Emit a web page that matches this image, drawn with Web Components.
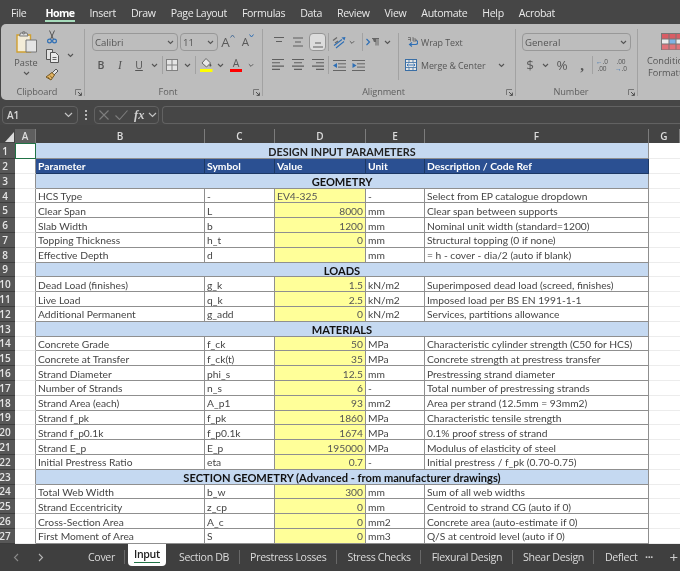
<!DOCTYPE html>
<html>
<head>
<meta charset="utf-8">
<title>Input</title>
<style>
  html, body { margin: 0; height: 100%; background: #464646; overflow: hidden; }
  body { display: flex; flex-direction: column; width: 680px; height: 571px; font-family: "Open Sans", sans-serif; filter: blur(.3px); }
</style>
</head>
<body>
<xl-menu>
  <xl-menu-item style="margin-right:4px">File</xl-menu-item>
  <xl-menu-item active>Home</xl-menu-item>
  <xl-menu-item>Insert</xl-menu-item>
  <xl-menu-item>Draw</xl-menu-item>
  <xl-menu-item>Page Layout</xl-menu-item>
  <xl-menu-item>Formulas</xl-menu-item>
  <xl-menu-item>Data</xl-menu-item>
  <xl-menu-item>Review</xl-menu-item>
  <xl-menu-item>View</xl-menu-item>
  <xl-menu-item>Automate</xl-menu-item>
  <xl-menu-item>Help</xl-menu-item>
  <xl-menu-item>Acrobat</xl-menu-item>
</xl-menu>
<xl-ribbon></xl-ribbon>
<xl-formula-bar></xl-formula-bar>
<xl-sheet></xl-sheet>
<xl-sheet-tabs>
  <xl-tab>Cover</xl-tab>
  <xl-tab active>Input</xl-tab>
  <xl-tab>Section DB</xl-tab>
  <xl-tab>Prestress Losses</xl-tab>
  <xl-tab>Stress Checks</xl-tab>
  <xl-tab>Flexural Design</xl-tab>
  <xl-tab>Shear Design</xl-tab>
  <xl-tab last>Deflect</xl-tab>
</xl-sheet-tabs>

<script>
// evenly spaced horizontal lines, [x1, x2] per line
function lines(list, top, step) {
  const d = list.map((l, i) => `M${l[0]} ${top + i * step}H${l[1]}`).join("");
  return `<svg width="14" height="14" viewBox="0 0 14 14"><path d="${d}" stroke="#5f5f5f" stroke-width="1.1" fill="none"/></svg>`;
}

const ICONS = {
  paste: `<svg width="21" height="22" viewBox="0 0 21 22"><path d="M1 4h13.500v17H1z" fill="#f3ecd8" stroke="#d0a030" stroke-width="1.4"/><path d="M4.500 2h6.500l1 3H3.500z" fill="#e2e2e2" stroke="#777"/><circle cx="7.700" cy="1.800" r="1.300" fill="none" stroke="#777"/><path d="M10 9h10.500v12H10z" fill="#e4e4e4" stroke="#777"/></svg>`,
  scissors: `<svg width="10" height="14" viewBox="0 0 10 14"><path d="M2.500 .5l3.800 8.500M7.500 .5L3.700 9" stroke="#555" stroke-width="1" fill="none"/><circle cx="2.500" cy="11" r="1.900" fill="none" stroke="#2f6fb5" stroke-width="1.200"/><circle cx="7.500" cy="11" r="1.900" fill="none" stroke="#2f6fb5" stroke-width="1.200"/></svg>`,
  copy: `<svg width="13" height="14" viewBox="0 0 13 14"><path d="M.5.500h6v10h-6z" fill="#e2e2e2" stroke="#555"/><path d="M4.500 3.500h5l3 3v7h-8z" fill="#e9e9e9" stroke="#555"/><path d="M6.500 8.500h4M6.500 10.500h4" stroke="#666"/></svg>`,
  painter: `<svg width="14" height="14" viewBox="0 0 14 14"><path d="M7 5l4-4 2 2-4 4z" fill="#e3e3e3" stroke="#555"/><path d="M7 4.500l2.500 2.500L6 12 1 9z" fill="#e2b464" stroke="#6b4d16" stroke-width=".9"/><path d="M3 9l1.500 2M5 7.500L7 10" stroke="#6b4d16" stroke-width=".7"/></svg>`,
  chev: `<svg width="7" height="5" viewBox="0 0 7 5"><path d="M1 1l2.500 2.500L6 1" fill="none" stroke="#555" stroke-width="1.100"/></svg>`,
  launcher: `<svg width="7" height="7" viewBox="0 0 7 7"><path d="M.5 6V.5H6" fill="none" stroke="#777"/><path d="M3 3l3.200 3.200M6.400 3.600v2.800H3.600" fill="none" stroke="#444" stroke-width=".9"/></svg>`,
  borders: `<svg width="12" height="12" viewBox="0 0 12 12"><rect x=".5" y=".5" width="11" height="11" fill="#e4e4e4" stroke="#808080"/><path d="M6 .5v11M.5 6h11" stroke="#808080"/></svg>`,
  fill: `<svg width="13" height="14" viewBox="0 0 13 14"><path d="M6 .5l4.500 4.500-4 4L2 5z" fill="#e8e8e8" stroke="#666"/><path d="M10.500 5.500c.7 1 .9 1.500.9 2a1 1 0 0 1-2 0c0-.5.4-1 1.100-2z" fill="#555"/><rect x="0" y="11" width="12.500" height="3" fill="#ffff00"/></svg>`,
  grow: `<svg width="5" height="4" viewBox="0 0 5 4"><path d="M.5 3.500L2.500 1l2 2.500" fill="none" stroke="#4b6f96" stroke-width="1"/></svg>`,
  shrink: `<svg width="5" height="4" viewBox="0 0 5 4"><path d="M.5.5L2.500 3l2-2.500" fill="none" stroke="#2f6fb5" stroke-width="1"/></svg>`,
  alTop: lines([[2,12],[4,10]], 2.500, 4),
  alMid: lines([[2,12],[4,10],[2,12]], 3, 4),
  alBot: lines([[4,10],[2,12]], 8, 4),
  left: lines([[1,13],[1,9],[1,13],[1,9]], 1.500, 3.300),
  center: lines([[1,13],[3,11],[1,13],[3,11]], 1.500, 3.300),
  right: lines([[1,13],[5,13],[1,13],[5,13]], 1.500, 3.300),
  orient: `<svg width="14" height="13" viewBox="0 0 14 13"><path d="M2 9.500l8-6M4 12l8-6.500" stroke="#2f6fb5" stroke-width="1.100" fill="none"/><path d="M13.500 1l-4 .6 3 3z" fill="#2f6fb5"/><path d="M1 4.500l4-3M3 7l3-2" stroke="#666" stroke-width="1.200"/></svg>`,
  rtl: `<svg width="14" height="8" viewBox="0 0 14 8"><path d="M.5 1l3 3-3 3" fill="none" stroke="#2f6fb5" stroke-width="1.200"/><path d="M6 .5h7M10 .5v7M12 .5v7" stroke="#666"/><path d="M6.500 .5h3.500v3.500H8z" fill="#666"/></svg>`,
  outdent: `<svg width="13" height="11" viewBox="0 0 13 11"><path d="M0 .5h13M5 3.800h8M5 7.100h8M0 10.500h13" stroke="#666"/><path d="M0 5.500l4-2.500v5z" fill="#2f6fb5"/></svg>`,
  indent: `<svg width="13" height="11" viewBox="0 0 13 11"><path d="M0 .5h13M5 3.800h8M5 7.100h8M0 10.500h13" stroke="#666"/><path d="M4.500 5.500L.5 3v5z" fill="#2f6fb5"/></svg>`,
  wrap: `<svg width="11" height="12" viewBox="0 0 11 12"><path d="M8.500 4.500c3 0 3 4 0 4H3" fill="none" stroke="#2f6fb5" stroke-width="1.100"/><path d="M5 6.500L2.500 8.500 5 10.500" fill="none" stroke="#2f6fb5" stroke-width="1.100"/><path d="M1 3.500h3M1 1.500h2.500v4M6 1v4h3V3H6" fill="none" stroke="#666" stroke-width=".8"/></svg>`,
  merge: `<svg width="12" height="12" viewBox="0 0 12 12"><rect x=".5" y=".5" width="11" height="11" fill="#e6e6e6" stroke="#3a6ea5"/><path d="M.5 3.500h11M.5 8.500h11M4 .5v3M8 .5v3M4 8.500v3M8 8.500v3" stroke="#3a6ea5" stroke-width=".8"/><path d="M2 6h8M3.500 4.700L2 6l1.500 1.300M8.500 4.700L10 6 8.500 7.300" stroke="#2f6fb5" fill="none" stroke-width=".9"/></svg>`,
  cond: `<svg width="22" height="17" viewBox="0 0 22 17"><rect x=".5" y=".5" width="21" height="16" fill="#ececec" stroke="#777"/><path d="M1 1h20v5H1z" fill="#d85c64"/><path d="M8 6h7v5H8z" fill="#7fb2e5"/><path d="M1 11h20v5.500H1z" fill="#e0737a"/><path d="M8 .5v16M15 .5v16M.5 6h21M.5 11h21" stroke="#777" fill="none"/></svg>`,
  x: `<svg width="10" height="10" viewBox="0 0 10 10"><path d="M.5.500l9 9M9.500.5l-9 9" stroke="#7d7d7d" stroke-width="1.100"/></svg>`,
  check: `<svg width="13" height="10" viewBox="0 0 13 10"><path d="M.5 5.500l4 4 8-9" fill="none" stroke="#7d7d7d" stroke-width="1.100"/></svg>`,
  chevLight: `<svg width="9" height="6" viewBox="0 0 9 6"><path d="M1 1l3.500 3.500L8 1" fill="none" stroke="#c4c4c4" stroke-width="1.200"/></svg>`,
  corner: `<svg width="9" height="10" viewBox="0 0 9 10"><path d="M9 0v10H0z" fill="#dcdcdc"/></svg>`,
  prev: `<svg width="6" height="9" viewBox="0 0 6 9"><path d="M5 1L1.500 4.500 5 8" fill="none" stroke="#8a8a8a" stroke-width="1.100"/></svg>`,
  next: `<svg width="6" height="9" viewBox="0 0 6 9"><path d="M1 1l3.500 3.500L1 8" fill="none" stroke="#b5b5b5" stroke-width="1.100"/></svg>`
};

class XlIcon extends HTMLElement {
  connectedCallback() {
    const root = this.attachShadow({ mode: "open" });
    const w = this.getAttribute("w");
    root.innerHTML = `<style>
      :host { display: flex; align-items: center; justify-content: center; flex: none; ${w ? `width:${w}px;` : ""} }
      svg { display: block; }
    </style>${ICONS[this.getAttribute("name")]}`;
  }
}
customElements.define("xl-icon", XlIcon);

class XlMenu extends HTMLElement {
  constructor() {
    super();
    this.attachShadow({ mode: "open" }).innerHTML = `<style>
      :host { display: flex; flex: none; height: 24px; padding-left: 11px; gap: 15px; background: #464646; }
    </style><slot></slot>`;
  }
}
customElements.define("xl-menu", XlMenu);

class XlMenuItem extends HTMLElement {
  constructor() {
    super();
    this.attachShadow({ mode: "open" }).innerHTML = `<style>
      :host { display: block; height: 22px; font: 10.6px/26px "Open Sans", sans-serif; letter-spacing: -.35px; color: #e9e9e9; white-space: nowrap; }
      :host([active]) { font-weight: 700; color: #fff; border-bottom: 2px solid #a7dcbc; height: 20px; letter-spacing: -.55px; }
    </style><slot></slot>`;
  }
}
customElements.define("xl-menu-item", XlMenuItem);

class XlRibbon extends HTMLElement {
  constructor() {
    super();
    const ic = (name, w, css = "") => `<xl-icon name="${name}" w="${w}" style="${css}"></xl-icon>`;
    const group = (w, label, launcher, body, cls = "") => `
      <section class="group" style="width:${w}px">
        <div class="body ${cls}">${body}</div>
        <div class="label">${label ? `<span>${label}</span>` : ""}</div>
        ${launcher ? `<xl-icon class="launch" name="launcher"></xl-icon>` : ""}
      </section>`;
    this.attachShadow({ mode: "open" }).innerHTML = `<style>
      :host { display: flex; flex: none; height: 76px; margin-left: 1px; background: #bdbdbd; border-radius: 5px 0 0 5px; overflow: hidden; font: 9.2px "Open Sans", sans-serif; color: #565656; }
      .group { position: relative; flex: none; box-sizing: border-box; display: flex; flex-direction: column; overflow: hidden; }
      .group:not(:last-child)::after { content: ""; position: absolute; right: 0; top: 5px; bottom: 4px; width: 1px; background: #a2a2a2; }
      .body { flex: 1; display: flex; min-height: 0; }
      .label { flex: none; height: 16px; padding-right: 12px; line-height: 16px; text-align: center; color: #5e5e5e; letter-spacing: -.1px; }
      .launch { position: absolute; right: 3px; bottom: 4px; }
      .row { display: flex; align-items: center; height: 18px; }
      .stack { display: flex; flex-direction: column; padding-top: 9px; }
      .stack .row + .row { margin-top: 5px; }
      .combo { box-sizing: border-box; display: flex; align-items: center; justify-content: space-between; height: 18px; padding: 0 3px 0 2px; border: 1px solid #989898; border-radius: 4px; color: #555; font-size: 9.6px; }
      .sep { flex: none; width: 1px; height: 18px; background: #a2a2a2; }
      .glyph { flex: none; text-align: center; font: 600 10.5px "Open Sans", sans-serif; color: #555; }
      .act { box-sizing: border-box; display: flex; justify-content: center; align-items: center; height: 18px; border: 1px solid #949494; border-radius: 4px; background: #dcdcdc; }

      .clip { padding-left: 12px; }
      .paste { display: flex; flex-direction: column; align-items: center; width: 26px; padding-top: 7px; }
      .paste span { margin-top: 4px; line-height: 12px; }
      .paste xl-icon + span + xl-icon { margin-top: 2px; }
      .tools { margin: 3px 0 0 5px; display: grid; grid-template-columns: 16px 20px; grid-auto-rows: 19px; align-items: center; }

      .a-big { display: flex; align-items: flex-start; justify-content: center; font-size: 13.500px; font-weight: 400; line-height: 16px; color: #5a5a5a; }
      .a-small { font-size: 11.500px; }
      .u { text-decoration: underline; }
      .i { font: italic 400 11.500px "Liberation Serif", serif; }
      .acolor { display: flex; flex-direction: column; align-items: center; line-height: 11px; font-weight: 400; color: #5a5a5a; }
      .acolor i { display: block; width: 12px; height: 3px; background: #f00; }
      .tall { height: 47px; align-self: flex-start; }
      .wide { font-size: 8.9px; color: #555; white-space: nowrap; letter-spacing: -.05px; }
      .dollar { font-size: 13.500px; font-weight: 400; color: #5a5a5a; }
      .dec { font: 400 6.500px/7px "Open Sans", sans-serif; color: #555; text-align: center; }
      .dec b { color: #2f6fb5; font-weight: 700; }
      .cond { display: flex; flex-direction: column; align-items: center; width: 50px; margin-left: 9px; padding-top: 9px; white-space: nowrap; line-height: 12px; }
      .cond span:first-of-type { margin-top: 5px; }
    </style>
    ${group(84, "Clipboard", true, `
      <div class="paste"><xl-icon name="paste"></xl-icon><span>Paste</span>${ic("chev", 10)}</div>
      <div class="tools">
        ${ic("scissors", 16)}<i></i>
        ${ic("copy", 16)}${ic("chev", 20)}
        ${ic("painter", 16)}<i></i>
      </div>`, "clip")}
    ${group(178, "Font", true, `<div class="stack" style="padding-left:7px">
      <div class="row">
        <div class="combo" style="width:86px;margin-right:2px"><span>Calibri</span>${ic("chev", 7)}</div>
        <div class="combo" style="width:38px"><span>11</span>${ic("chev", 7)}</div>
        <div class="glyph a-big" style="width:20px">A<xl-icon name="grow"></xl-icon></div>
        <div class="glyph a-big a-small" style="width:20px">A<xl-icon name="shrink"></xl-icon></div>
      </div>
      <div class="row">
        <div class="glyph" style="width:18px">B</div>
        <div class="glyph i" style="width:20px">I</div>
        <div class="glyph u" style="width:18px;font-weight:400">U</div>
        ${ic("chev", 12)}
        <div class="sep" style="margin:0 0 0 2px"></div>
        ${ic("borders", 18)}${ic("chev", 12)}
        <div class="sep" style="margin:0 0 0 2px"></div>
        ${ic("fill", 20)}${ic("chev", 8)}
        <div class="glyph acolor" style="width:24px">A<i></i></div>
        ${ic("chev", 6)}
      </div></div>`)}
    ${group(253, "Alignment", true, `<div class="stack" style="padding-left:6px">
      <div class="row">
        ${ic("alTop", 20)}${ic("alMid", 18)}
        <div class="act" style="width:17px;margin-left:2px">${ic("alBot", 14)}</div>
        <div class="sep" style="margin-left:2px"></div>
        ${ic("orient", 20)}${ic("chev", 6)}
        <div class="sep" style="margin-left:7px"></div>
        ${ic("rtl", 20)}${ic("chev", 8)}
        <div class="sep tall" style="margin-left:7px"></div>
        ${ic("wrap", 11, "margin-left:8px")}
        <span class="wide" style="margin-left:3px">Wrap Text</span>
      </div>
      <div class="row">
        ${ic("left", 18)}${ic("center", 22)}${ic("right", 18)}
        <div class="sep" style="margin-left:1px"></div>
        ${ic("outdent", 20)}${ic("indent", 18)}
        ${ic("merge", 12, "margin-left:38px")}
        <span class="wide" style="margin-left:4px">Merge &amp; Center</span>
        ${ic("chev", 8, "margin-left:12px")}
      </div></div>`)}
    ${group(122, "Number", true, `<div class="stack" style="padding-left:6px">
      <div class="combo" style="width:109px"><span>General</span>${ic("chev", 7)}</div>
      <div class="row" style="margin-top:5px">
        <div class="glyph dollar" style="width:16px">$</div>
        ${ic("chev", 14)}
        <div class="glyph dollar" style="width:20px">%</div>
        <div class="glyph" style="width:20px;font:700 15px/12px 'Liberation Serif',serif">,</div>
        <div class="sep"></div>
        <div class="dec" style="width:18px"><b>&#8592;</b>.0<br>.00</div>
        <div class="dec" style="width:20px">.00<br><b>&#8594;</b>.0</div>
      </div></div>`)}
    ${group(42, "", false, `<div class="cond">${ic("cond", 22)}<span>Conditional</span><span>Formatting</span></div>`)}`;
  }
}
customElements.define("xl-ribbon", XlRibbon);

class XlFormulaBar extends HTMLElement {
  constructor() {
    super();
    this.attachShadow({ mode: "open" }).innerHTML = `<style>
      :host { display: flex; flex: none; height: 25px; box-sizing: border-box; padding: 6px 0 1px 2px; background: #464646; align-items: stretch; color: #d8d8d8; font: 600 10px "Open Sans", sans-serif; }
      .box { box-sizing: border-box; display: flex; align-items: center; border: 1px solid #626262; border-radius: 4px; }
      .name { width: 76px; justify-content: space-between; padding: 0 4px; }
      .kebab { width: 16px; display: flex; flex-direction: column; align-items: center; justify-content: center; gap: 2px; }
      .kebab i { width: 2px; height: 2px; background: #b8b8b8; }
      .fx { width: 65px; padding-left: 4px; }
      .fx b { width: 14px; margin-left: 6px; font: italic 700 12.500px "Liberation Serif", serif; color: #cfcfcf; }
      .fx xl-icon:nth-of-type(2) { margin-left: 6px; }
      .input { flex: 1; margin-left: 3px; border-right: 0; border-radius: 4px 0 0 4px; }
    </style>
    <div class="box name"><span>A1</span><xl-icon name="chevLight"></xl-icon></div>
    <div class="kebab"><i></i><i></i><i></i></div>
    <div class="box fx"><xl-icon name="x"></xl-icon><xl-icon name="check"></xl-icon><b>fx</b><xl-icon name="chevLight"></xl-icon></div>
    <div class="box input"></div>`;
  }
}
customElements.define("xl-formula-bar", XlFormulaBar);

const SHEET_ROWS = [
  ["title", "DESIGN INPUT PARAMETERS"],
  ["head", "Parameter", "Symbol", "Value", "Unit", "Description / Code Ref"],
  ["section", "GEOMETRY"],
  ["data", "HCS Type", "-", "EV4-325", "-", "Select from EP catalogue dropdown"],
  ["data", "Clear Span", "L", "8000", "mm", "Clear span between supports"],
  ["data", "Slab Width", "b", "1200", "mm", "Nominal unit width (standard=1200)"],
  ["data", "Topping Thickness", "h_t", "0", "mm", "Structural topping (0 if none)"],
  ["data", "Effective Depth", "d", "", "mm", "= h - cover - dia/2 (auto if blank)"],
  ["section", "LOADS"],
  ["data", "Dead Load (finishes)", "g_k", "1.5", "kN/m2", "Superimposed dead load (screed, finishes)"],
  ["data", "Live Load", "q_k", "2.5", "kN/m2", "Imposed load per BS EN 1991-1-1"],
  ["data", "Additional Permanent", "g_add", "0", "kN/m2", "Services, partitions allowance"],
  ["section", "MATERIALS"],
  ["data", "Concrete Grade", "f_ck", "50", "MPa", "Characteristic cylinder strength (C50 for HCS)"],
  ["data", "Concrete at Transfer", "f_ck(t)", "35", "MPa", "Concrete strength at prestress transfer"],
  ["data", "Strand Diameter", "phi_s", "12.5", "mm", "Prestressing strand diameter"],
  ["data", "Number of Strands", "n_s", "6", "-", "Total number of prestressing strands"],
  ["data", "Strand Area (each)", "A_p1", "93", "mm2", "Area per strand (12.5mm = 93mm2)"],
  ["data", "Strand f_pk", "f_pk", "1860", "MPa", "Characteristic tensile strength"],
  ["data", "Strand f_p0.1k", "f_p0.1k", "1674", "MPa", "0.1% proof stress of strand"],
  ["data", "Strand E_p", "E_p", "195000", "MPa", "Modulus of elasticity of steel"],
  ["data", "Initial Prestress Ratio", "eta", "0.7", "-", "Initial prestress / f_pk (0.70-0.75)"],
  ["section", "SECTION GEOMETRY (Advanced - from manufacturer drawings)"],
  ["data", "Total Web Width", "b_w", "300", "mm", "Sum of all web widths"],
  ["data", "Strand Eccentricity", "z_cp", "0", "mm", "Centroid to strand CG (auto if 0)"],
  ["data", "Cross-Section Area", "A_c", "0", "mm2", "Concrete area (auto-estimate if 0)"],
  ["data", "First Moment of Area", "S", "0", "mm3", "Q/S at centroid level (auto if 0)"]
];

class XlSheet extends HTMLElement {
  constructor() {
    super();
    let cells = `<div class="corner"><xl-icon name="corner"></xl-icon></div>`;
    "ABCDEFG".split("").forEach(c => {
      cells += `<div class="col ${c === "A" ? "on" : ""}">${c}</div>`;
    });
    SHEET_ROWS.forEach((row, i) => {
      const [kind, ...vals] = row;
      cells += `<div class="rh">${i + 1}</div>`;
      cells += `<div class="c a ${i === 0 ? "sel" : ""}"></div>`;
      if (kind === "title" || kind === "section") {
        cells += `<div class="c span ${kind}">${vals[0]}</div>`;
      } else if (kind === "head") {
        vals.forEach(v => { cells += `<div class="c head">${v}</div>`; });
      } else {
        vals.forEach((v, n) => {
          let cls = "c d";
          if (n === 2) cls += /^[\d.]+$/.test(v) || v === "" ? " val num" : " val";
          cells += `<div class="${cls}">${v}</div>`;
        });
      }
      cells += `<div class="c g"></div>`;
    });
    this.attachShadow({ mode: "open" }).innerHTML = `<style>
      :host { display: block; flex: none; background: #444; }
      .grid { display: grid; grid-template-columns: 15px 21px 169px 70px 91px 59px 224px 31px; grid-template-rows: 18px 16px repeat(26, 14.8px); font: 10.25px/13px Lato, sans-serif; color: #454545; }
      .corner { display: flex; justify-content: flex-end; align-items: flex-end; padding: 0 1px 1px 0; background: #444; }
      .col { display: flex; align-items: flex-end; justify-content: center; box-sizing: border-box; border-right: 1px solid #7c7c7c; margin-top: 4px; color: #dcdcdc; font: 600 10px/13px "Open Sans", sans-serif; }
      .col.on { background: #5f5f5f; }
      .rh { display: flex; align-items: center; justify-content: center; padding-right: 5px; background: #575757; box-sizing: border-box; border-bottom: 1px solid #3c3c3c; color: #e6e6e6; font: 600 10px "Open Sans", sans-serif; }
      .c { box-sizing: border-box; background: #fff; overflow: hidden; white-space: nowrap; padding: 2px 2px 0; border-right: 1px solid #8f8f8f; border-bottom: 1px solid #8f8f8f; display: flex; align-items: center; }
      .a { border-bottom: 1px solid #ececec; }
      .sel { outline: 1.500px solid #217346; outline-offset: -1px; z-index: 1; }
      .g { border: 0; border-bottom: 1px solid #ececec; }
      .span { grid-column: span 5; justify-content: center; background: #c5d9f1; color: #111; font-weight: 700; font-size: 11.1px; }
      .title { color: #222; font-size: 10.8px; }
      .head { background: #2b5092; color: #fff; font-weight: 700; font-size: 10.3px; border-color: #1c3864; }
      .val { background: #ffff99; color: #555; }
      .num { justify-content: flex-end; }
    </style><div class="grid">${cells}</div>`;
  }
}
customElements.define("xl-sheet", XlSheet);

class XlSheetTabs extends HTMLElement {
  constructor() {
    super();
    this.attachShadow({ mode: "open" }).innerHTML = `<style>
      :host { flex: 1; display: flex; align-items: flex-start; background: #3f3f3f; overflow: hidden; color: #ddd; font: 10.6px "Open Sans", sans-serif; letter-spacing: -.33px; }
      .nav { flex: none; display: flex; width: 77.500px; height: 24px; align-items: center; padding: 3px 0 0 13px; gap: 19px; box-sizing: border-box; }
      .tabs { flex: none; width: 565px; display: flex; overflow: hidden; }
      .more { flex: none; display: flex; align-items: center; height: 24px; padding-top: 1px; color: #ccc; }
      .dots { width: 13px; text-align: center; font-weight: 700; }
      .plus { width: 12px; margin-left: 12px; text-align: center; font-size: 15px; }
    </style>
    <div class="nav"><xl-icon name="prev"></xl-icon><xl-icon name="next"></xl-icon></div>
    <div class="tabs"><slot></slot></div>
    <div class="more"><span class="dots">&#183;&#183;&#183;</span><span class="plus">+</span></div>`;
  }
}
customElements.define("xl-sheet-tabs", XlSheetTabs);

class XlTab extends HTMLElement {
  constructor() {
    super();
    this.attachShadow({ mode: "open" }).innerHTML = `<style>
      :host { position: relative; flex: none; display: block; height: 24px; line-height: 27px; padding: 0 10.500px; white-space: nowrap; color: #dcdcdc; }
      :host::after { content: ""; position: absolute; right: 0; top: 6px; height: 14px; width: 1px; background: #686868; }
      :host([active]) { width: 38px; box-sizing: border-box; height: 22px; margin: 0 2.500px; padding: 0; text-align: center; background: #fff; color: #222; line-height: 20px; font-weight: 600; border-radius: 0 0 4px 4px; }
      :host([active])::after, :host([last])::after { display: none; }
      span { display: inline-block; }
      :host([active]) span { line-height: 15px; margin-top: 1px; border-bottom: 1.500px solid #217346; }
    </style><span><slot></slot></span>`;
  }
}
customElements.define("xl-tab", XlTab);
</script>
</body>
</html>
